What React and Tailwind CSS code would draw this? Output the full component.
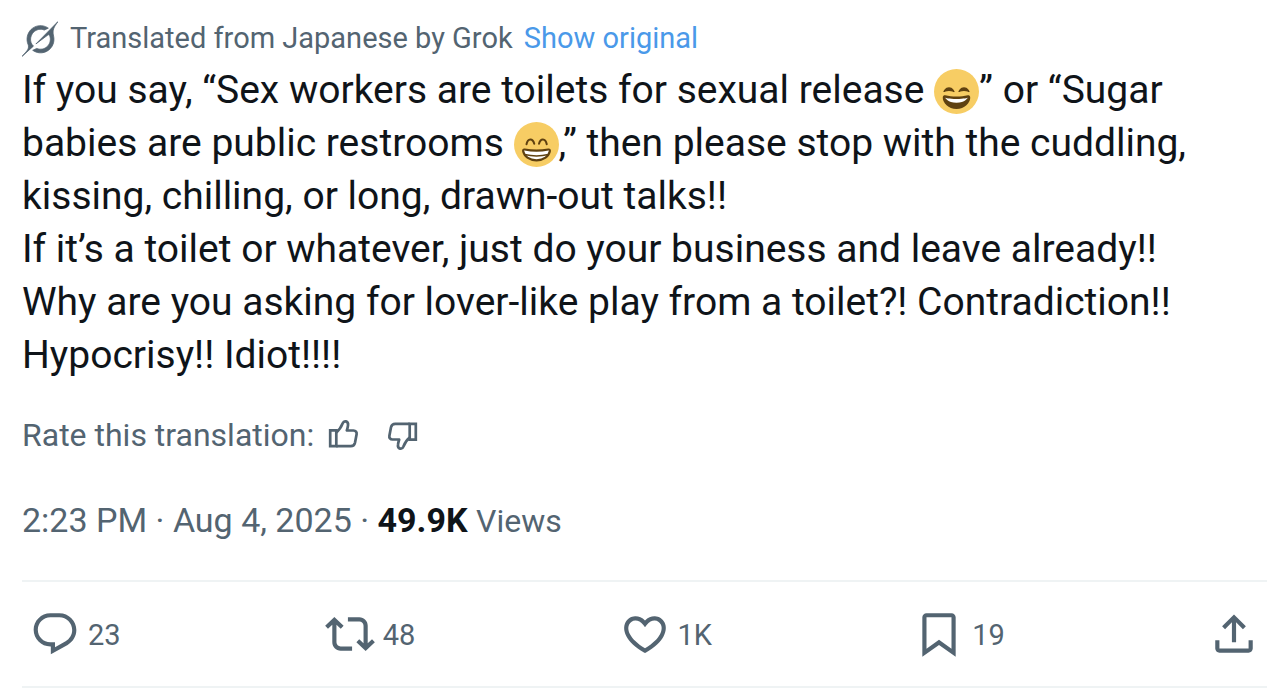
import React from "react";

const paths = {
  reply:
    "M1.751 10c0-4.42 3.584-8 8.005-8h4.366c4.49 0 8.129 3.64 8.129 8.13 0 2.96-1.607 5.68-4.196 7.11l-8.054 4.46v-3.69h-.067c-4.49.1-8.183-3.51-8.183-8.01zm8.005-6c-3.317 0-6.005 2.69-6.005 6 0 3.37 2.77 6.08 6.138 6.01l.351-.01h1.761v2.3l5.087-2.81c1.951-1.08 3.163-3.13 3.163-5.36 0-3.39-2.744-6.13-6.129-6.13H9.756z",
  repost:
    "M4.5 3.88l4.432 4.14-1.364 1.46L5.5 7.55V16c0 1.1.896 2 2 2H13v2H7.5c-2.209 0-4-1.79-4-4V7.55L1.432 9.48.068 8.02 4.5 3.88zM16.5 6H11V4h5.5c2.209 0 4 1.79 4 4v8.45l2.068-1.93 1.364 1.46-4.432 4.14-4.432-4.14 1.364-1.46 2.068 1.93V8c0-1.1-.896-2-2-2z",
  like: "M16.697 5.5c-1.222-.06-2.679.51-3.89 2.16l-.805 1.09-.806-1.09C9.984 6.01 8.526 5.44 7.304 5.5c-1.243.07-2.349.78-2.91 1.91-.552 1.12-.633 2.78.479 4.82 1.074 1.97 3.257 4.27 7.129 6.61 3.87-2.34 6.052-4.64 7.126-6.61 1.111-2.04 1.03-3.7.477-4.82-.561-1.13-1.666-1.84-2.908-1.91zm4.187 7.69c-1.351 2.48-4.001 5.12-8.379 7.67l-.503.3-.504-.3c-4.379-2.55-7.029-5.19-8.382-7.67-1.36-2.5-1.41-4.86-.514-6.67.887-1.79 2.647-2.91 4.601-3.01 1.651-.09 3.368.56 4.798 2.01 1.429-1.45 3.146-2.1 4.796-2.01 1.954.1 3.714 1.22 4.601 3.01.896 1.81.846 4.17-.514 6.67z",
  bookmark:
    "M4 4c0-1.1.9-2 2-2h12c1.100 0 2 .9 2 2v18.940l-8-5.710-8 5.710V4zM6 4v15.060l6-4.290 6 4.290V4H6z",
  share:
    "M12 2.59l5.7 5.7-1.41 1.42L13 6.41V16h-2V6.41l-3.3 3.3-1.41-1.42L12 2.59zM21 15v4c0 1.100-.9 2-2 2H5c-1.100 0-2-.9-2-2v-4h2v4h14v-4h2z",
};

const actions = [
  { name: "reply", label: "Reply", count: "23" },
  { name: "repost", label: "Repost", count: "48" },
  { name: "like", label: "Like", count: "1K" },
  { name: "bookmark", label: "Bookmark", count: "19" },
];

function ActionIcon({ name }) {
  return (
    <svg viewBox="0 0 24 24" className="size-[50px] shrink-0 fill-current" aria-hidden="true">
      <path d={paths[name]} />
    </svg>
  );
}

function GrokIcon() {
  return (
    <svg viewBox="0 0 33 32" className="h-9 w-9 shrink-0 fill-current stroke-current" strokeWidth="0.7" aria-hidden="true">
      <path d="M12.745 20.54l10.97-8.19c.539-.4 1.307-.244 1.564.38 1.349 3.288.746 7.241-1.938 9.955-2.683 2.714-6.417 3.31-9.83 1.954l-3.728 1.745c5.347 3.697 11.84 2.782 15.898-1.324 3.219-3.255 4.216-7.692 3.284-11.693l.008.009c-1.351-5.878.332-8.227 3.782-13.031L33 0l-4.54 4.59v-.014L12.743 20.544m-2.263 1.987c-3.837-3.707-3.175-9.446.1-12.755 2.42-2.449 6.388-3.448 9.852-1.979l3.72-1.737c-.67-.49-1.53-1.017-2.515-1.387-4.455-1.854-9.789-.931-13.41 2.728-3.483 3.523-4.579 8.94-2.697 13.561 1.405 3.454-.899 5.898-3.22 8.364C1.49 30.2.666 31.074 0 32l10.478-9.466" />
    </svg>
  );
}

function ThumbIcon({ className }) {
  return (
    <svg
      viewBox="0 0 32 32"
      className={className}
      fill="none"
      stroke="currentColor"
      strokeWidth="2.700"
      strokeLinejoin="round"
      aria-hidden="true"
    >
      <path d="M2.200 11.300H8.300V27.200H2.200z" strokeLinejoin="miter" />
      <path d="M8.300 13.300c3.500-2.600 4.800-5 6.400-9 .7-1.600 1.800-2.300 3.200-1.900 1.700.5 2.400 2 2.100 3.900-.2 1.700-.6 3.300-1.200 5.200h6.700c2.200 0 3.500 1.700 3.100 3.800l-1.600 8.400c-.5 2.200-2 3.500-4.200 3.500H8.300" />
    </svg>
  );
}

function SmileEmoji() {
  return (
    <svg viewBox="0 0 36 36" className="inline-block size-[45px] align-[-11px]" role="img" aria-label="Smiling face">
      <circle cx="18" cy="18" r="18" fill="#f7cd64" />
      <path
        fill="#5f4110"
        d="M28.457 17.797c-.06-.135-1.499-3.297-4.457-3.297-2.957 0-4.397 3.162-4.457 3.297-.092.207-.032.449.145.591.175.142.426.147.61.014.012-.009 1.262-.902 3.702-.902 2.426 0 3.674.881 3.702.901.098.076.22.114.298.099.4 0 .6-.4.457-.703zm-12 0c-.06-.135-1.499-3.297-4.457-3.297-2.957 0-4.397 3.162-4.457 3.297-.092.207-.032.449.144.591.176.142.427.147.61.014.013-.009 1.262-.902 3.703-.902 2.426 0 3.674.881 3.702.901.098.076.22.114.298.099.4 0 .6-.4.457-.703zM18 22c-3.623 0-6.027-.422-9-1-.679-.131-2 0-2 2 0 4 4.595 9 11 9 6.404 0 11-5 11-9 0-2-1.321-2.132-2-2-2.973.578-5.377 1-9 1z"
      />
      <path fill="#fff" d="M9 23s3 1 9 1 9-1 9-1-2 4-9 4-9-4-9-4z" />
    </svg>
  );
}

function GrinEmoji() {
  return (
    <svg viewBox="0 0 36 36" className="inline-block size-[45px] align-[-11px]" role="img" aria-label="Beaming face">
      <circle cx="18" cy="18" r="18" fill="#f7cd64" />
      <g fill="none" stroke="#5f4110" strokeWidth="1.600" strokeLinecap="round">
        <path d="M10 17.800c1-5 5-5 6.200-.4M20 17.400c1.200-4.600 5.200-4.600 6.200.4" />
      </g>
      <path
        fill="#fff"
        stroke="#5f4110"
        strokeWidth="1.700"
        strokeLinejoin="round"
        d="M8.500 22c6 1.200 13 1.200 19 0 1-.2 1.300.5 1.200 1.200-.7 4.300-5 7.500-10.700 7.500S8 27.500 7.300 23.200c-.1-.7.200-1.400 1.200-1.200z"
      />
      <path fill="none" stroke="#5f4110" strokeWidth="1.200" d="M8.500 26c6 1.400 13 1.400 19 0" />
    </svg>
  );
}

function App() {
  return (
    <article className="bg-white pl-[22px] pr-[11px] pt-[17px] font-['Roboto',sans-serif] text-[#536471]">
      <div className="flex h-11 items-center gap-3 text-[29px]">
        <GrokIcon />
        <p>
          Translated from Japanese by Grok{" "}
          <a href="#original" className="ml-1 text-[#4a99e9]">
            Show original
          </a>
        </p>
      </div>

      <div className="mt-[3px] text-[39px] leading-[53px] text-[#0f1419]">
        <p>
          If you say, “Sex workers are toilets for sexual release <SmileEmoji />” or “Sugar
          <br />
          babies are public restrooms <GrinEmoji />,” then please stop with the cuddling,
          <br />
          kissing, chilling, or long, drawn-out talks!!
        </p>
        <p>If it’s a toilet or whatever, just do your business and leave already!!</p>
        <p>
          Why are you asking for lover-like play from a toilet?! Contradiction!!
          <br />
          Hypocrisy!! Idiot!!!!
        </p>
      </div>

      <div className="mt-[31px] flex h-11 items-center text-[32px]">
        <span>Rate this translation:</span>
        <button type="button" aria-label="Good translation" className="ml-[14px]">
          <ThumbIcon className="size-8" />
        </button>
        <button type="button" aria-label="Bad translation" className="ml-[26px]">
          <ThumbIcon className="size-8 rotate-180" />
        </button>
      </div>

      <p className="mt-[43px] h-10 text-[34px] leading-10">
        <time dateTime="2025-08-04T14:23">2:23 PM · Aug 4, 2025</time> ·{" "}
        <a href="#views">
          <strong className="font-bold text-[#0f1419]">49.9K</strong>{" "}
          <span className="text-[32px]">Views</span>
        </a>
      </p>

      <div className="mt-10 flex h-[108px] items-center border-y-2 border-[#eff3f4] px-2">
        {actions.map((action) => (
          <div key={action.name} className="flex-1">
            <button type="button" aria-label={action.label} className="flex items-center gap-2 text-[29px]">
              <ActionIcon name={action.name} />
              <span className="pt-1">{action.count}</span>
            </button>
          </div>
        ))}
        <button type="button" aria-label="Share">
          <ActionIcon name="share" />
        </button>
      </div>
    </article>
  );
}

export default App;
